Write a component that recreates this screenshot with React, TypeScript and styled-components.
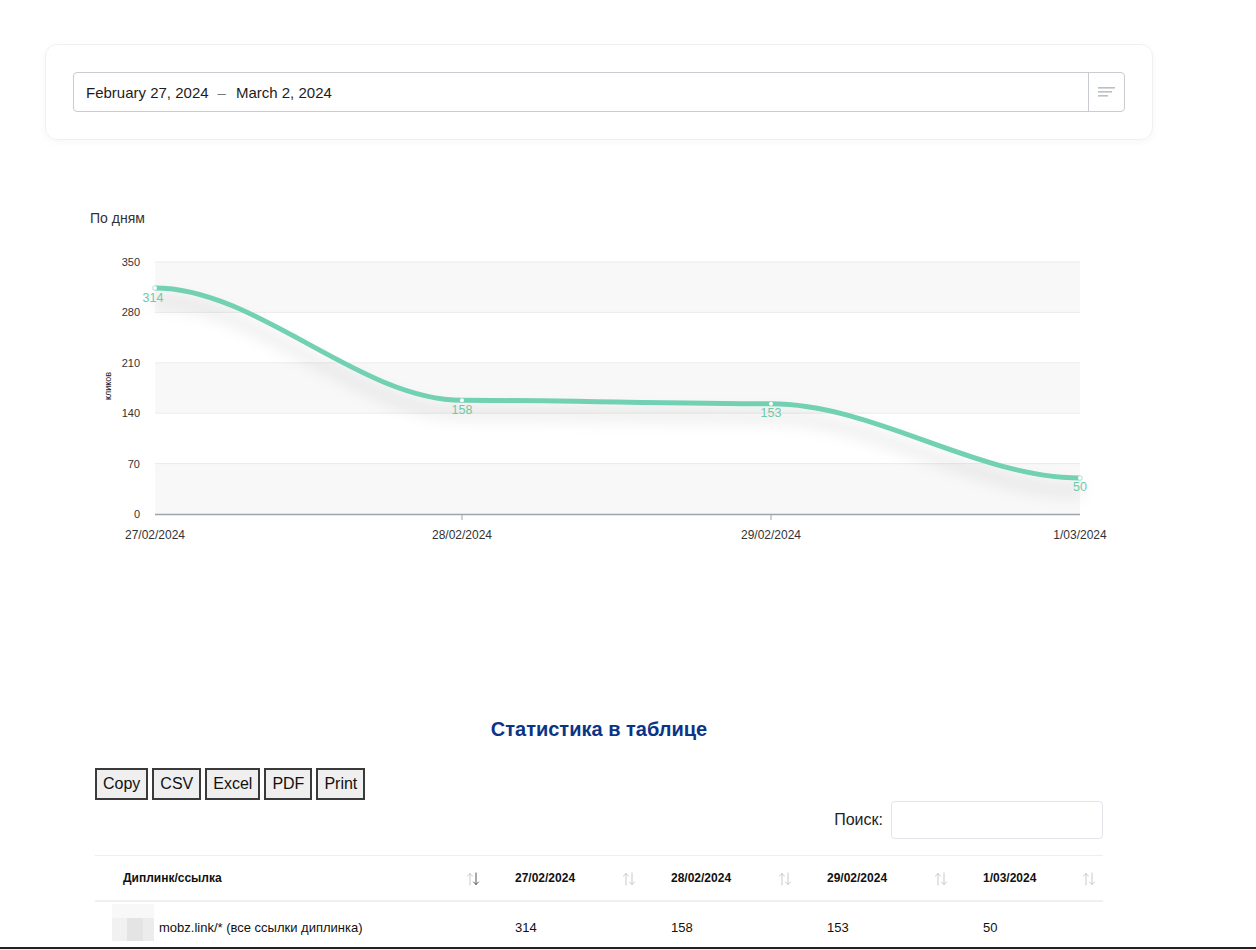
import React from 'react';
import styled, { createGlobalStyle } from 'styled-components';

const GlobalStyle = createGlobalStyle`
  body {
    margin: 0;
    background: #fff;
    font-family: "Liberation Sans", Arial, sans-serif;
    color: #222;
  }
`;

const Page = styled.div`
  padding-top: 44px;
  display: flex;
  flex-direction: column;
`;

const Card = styled.div`
  margin-left: 45px;
  width: 1108px;
  height: 96px;
  box-sizing: border-box;
  padding: 27px;
  border: 1px solid #eef0f3;
  border-radius: 12px;
  box-shadow: 0 2px 8px rgba(0, 0, 0, 0.035);
`;

const DateInput = styled.div`
  display: flex;
  height: 40px;
  box-sizing: border-box;
  border: 1px solid #c9ccd0;
  border-radius: 4px;
`;

const DateText = styled.div`
  flex: 1;
  display: flex;
  align-items: center;
  padding-left: 12px;
  font-size: 15px;
  color: #1d1d1d;
`;

const Dash = styled.span`
  margin: 0 10px 0 9px;
  color: #777;
`;

const MenuButton = styled.div`
  width: 35px;
  display: flex;
  align-items: center;
  justify-content: center;
  border-left: 1px solid #c9ccd0;
`;

const ChartSection = styled.div`
  margin: 70px 0 0 90px;
  display: flex;
  flex-direction: column;
`;

const ChartTitle = styled.div`
  font-size: 14px;
  line-height: 16px;
  color: #333;
`;

const TableSection = styled.div`
  margin-left: 95px;
  width: 1008px;
  display: flex;
  flex-direction: column;
`;

const Heading = styled.h2`
  margin: 158px 0 0;
  text-align: center;
  font-size: 20px;
  line-height: 24px;
  font-weight: bold;
  color: #0b3487;
`;

const ButtonBar = styled.div`
  margin-top: 27px;
  display: flex;
  gap: 4px;
`;

const ExportButton = styled.button`
  height: 32px;
  padding: 0 6px;
  border: 2px solid #3a3a3a;
  background: #efefef;
  font-family: "Liberation Sans", Arial, sans-serif;
  font-size: 16px;
  color: #111;
`;

const SearchRow = styled.div`
  margin-top: 1px;
  display: flex;
  justify-content: flex-end;
  align-items: center;
  gap: 8px;
  font-size: 16px;
  color: #222;
`;

const SearchInput = styled.input`
  width: 212px;
  height: 38px;
  box-sizing: border-box;
  border: 1px solid #e2e5ea;
  border-radius: 4px;
`;

const Table = styled.table`
  margin-top: 16px;
  width: 1008px;
  border-collapse: collapse;
  border-top: 1px solid #eeeeee;
  table-layout: fixed;
`;

const Th = styled.th<{ $w: number }>`
  width: ${(p) => p.$w}px;
  height: 45px;
  padding: 0 7px 0 28px;
  box-sizing: border-box;
  border-bottom: 2px solid #eef0f4;
  text-align: left;
  font-size: 12px;
  font-weight: bold;
  color: #111;
`;

const HeadInner = styled.div`
  display: flex;
  justify-content: space-between;
  align-items: center;
`;

const SortIcon = styled.svg`
  margin-top: 3px;
  flex: none;
`;

const Td = styled.td<{ $first?: boolean }>`
  height: 39px;
  padding: 6px 0 0 ${(p) => (p.$first ? 17 : 28)}px;
  font-size: 13px;
  color: #111;
`;

const LinkCell = styled.div`
  display: flex;
  align-items: center;
`;

const Blurred = styled.div`
  width: 42px;
  height: 37px;
  margin: -10px 5px 0 0;
  background:
    linear-gradient(#f8f8f8, #f8f8f8) top / 100% 14px no-repeat,
    linear-gradient(90deg, #f1f1f1 0 15px, #e4e4e4 15px 31px, #ececec 31px);
`;

const BottomBar = styled.div`
  height: 8px;
  border-top: 2px solid #222;
  background: #e9edf1;
`;

const ys = (v: number) => 514 - v * 0.72;

const Chart: React.FC = () => {
  const ticks = [0, 70, 140, 210, 280, 350];
  const xs = [155, 462, 771, 1080];
  const dates = ['27/02/2024', '28/02/2024', '29/02/2024', '1/03/2024'];
  const vals = [314, 158, 153, 50];
  const pts = xs.map((x, i) => [x, ys(vals[i])]);
  let d = `M${pts[0][0]},${pts[0][1]}`;
  for (let i = 1; i < pts.length; i++) {
    const [x0, y0] = pts[i - 1];
    const [x1, y1] = pts[i];
    const dx = (x1 - x0) / 3;
    d += ` C${x0 + dx},${y0} ${x1 - dx},${y1} ${x1},${y1}`;
  }
  return (
    <svg width="1040" height="333" viewBox="90 226 1040 333">
      <defs>
        <filter id="sh" x="-10%" y="-40%" width="120%" height="200%">
          <feDropShadow dx="0" dy="13" stdDeviation="8" floodColor="#000" floodOpacity="0.17" />
        </filter>
      </defs>
      {[350, 210, 70].map((t) => (
        <rect key={t} x={155} y={ys(t)} width={925} height={50.4} fill="#f8f8f8" />
      ))}
      {ticks.slice(1).map((t) => (
        <line key={t} x1={155} x2={1080} y1={ys(t)} y2={ys(t)} stroke="#ebebeb" />
      ))}
      {ticks.map((t) => (
        <text key={t} x={140} y={ys(t) + 4} textAnchor="end" fontSize="11" fill="#333">
          {t}
        </text>
      ))}
      <text x={111} y={386} fontSize="9" fill="#222" textAnchor="middle" transform="rotate(-90 111 386)">
        кликов
      </text>
      <line x1={155} x2={1080} y1={514.5} y2={514.5} stroke="#9ea4ab" strokeWidth="1.3" />
      {xs.slice(1, 3).map((x) => (
        <line key={x} x1={x} x2={x} y1={514} y2={520} stroke="#9ea4ab" />
      ))}
      {xs.map((x, i) => (
        <text key={x} x={x} y={539} textAnchor="middle" fontSize="12" fill="#333">
          {dates[i]}
        </text>
      ))}
      <path d={d} fill="none" stroke="#72d0b3" strokeWidth="5" strokeLinecap="round" filter="url(#sh)" />
      {pts.map(([x, y]) => (
        <circle key={x} cx={x} cy={y} r={2} fill="#fff" />
      ))}
      <text x={153} y={302} textAnchor="middle" fontSize="12.5" fill="#6ccaa9">314</text>
      <text x={462} y={414} textAnchor="middle" fontSize="12.5" fill="#6ccaa9">158</text>
      <text x={771} y={417} textAnchor="middle" fontSize="12.5" fill="#6ccaa9">153</text>
      <text x={1080} y={491} textAnchor="middle" fontSize="12.5" fill="#6ccaa9">50</text>
    </svg>
  );
};

const Sort: React.FC<{ active?: boolean }> = ({ active }) => (
  <SortIcon width="14" height="14" viewBox="0 0 14 14">
    <g fill="none" strokeWidth="1" strokeLinecap="round">
      <path d="M4 13V1.5M1.5 4L4 1.5 6.5 4" stroke="#c9c9c9" />
      <path d="M10 1V12.5M7.5 10L10 12.5 12.5 10" stroke={active ? '#555' : '#c9c9c9'} />
    </g>
  </SortIcon>
);

const columns = [
  { title: 'Диплинк/ссылка', w: 392, active: true },
  { title: '27/02/2024', w: 156 },
  { title: '28/02/2024', w: 156 },
  { title: '29/02/2024', w: 156 },
  { title: '1/03/2024', w: 148 },
];

const App: React.FC = () => {
  return (
    <Page>
      <GlobalStyle />
      <Card>
        <DateInput>
          <DateText>
            February 27, 2024<Dash>–</Dash>March 2, 2024
          </DateText>
          <MenuButton>
            <svg width="18" height="12" viewBox="0 0 18 12">
              <rect x="0" y="1" width="17" height="1.6" fill="#bcc0c4" />
              <rect x="0" y="5" width="14" height="1.6" fill="#bcc0c4" />
              <rect x="0" y="9" width="10" height="1.6" fill="#bcc0c4" />
            </svg>
          </MenuButton>
        </DateInput>
      </Card>

      <ChartSection>
        <ChartTitle>По дням</ChartTitle>
        <Chart />
      </ChartSection>

      <TableSection>
        <Heading>Статистика в таблице</Heading>
        <ButtonBar>
          {['Copy', 'CSV', 'Excel', 'PDF', 'Print'].map((b) => (
            <ExportButton key={b}>{b}</ExportButton>
          ))}
        </ButtonBar>
        <SearchRow>
          Поиск:
          <SearchInput />
        </SearchRow>
        <Table>
          <thead>
            <tr>
              {columns.map((c) => (
                <Th key={c.title} $w={c.w}>
                  <HeadInner>
                    {c.title}
                    <Sort active={c.active} />
                  </HeadInner>
                </Th>
              ))}
            </tr>
          </thead>
          <tbody>
            <tr>
              <Td $first>
                <LinkCell>
                  <Blurred />
                  mobz.link/* (все ссылки диплинка)
                </LinkCell>
              </Td>
              <Td>314</Td>
              <Td>158</Td>
              <Td>153</Td>
              <Td>50</Td>
            </tr>
          </tbody>
        </Table>
      </TableSection>
      <BottomBar />
    </Page>
  );
};

export default App;
